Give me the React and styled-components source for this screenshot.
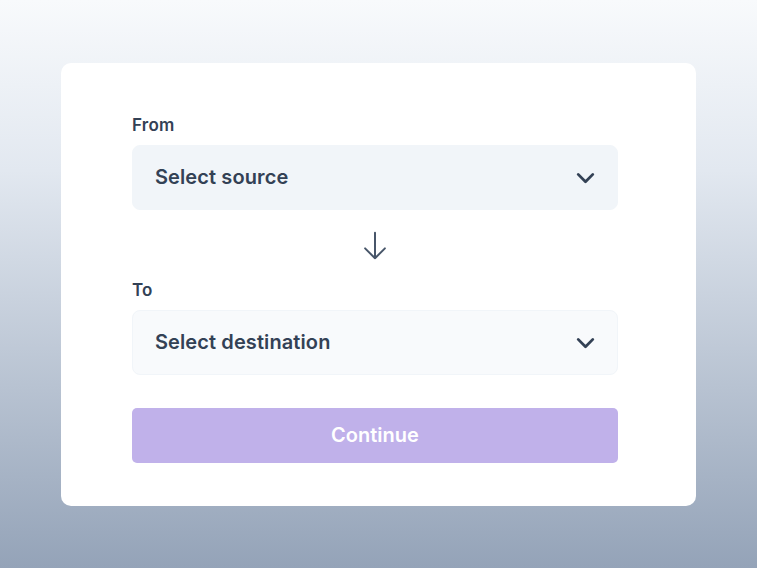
import styled, { createGlobalStyle } from "styled-components";

const GlobalStyle = createGlobalStyle`
  html, body {
    margin: 0;
    padding: 0;
    height: 100%;
  }
  body {
    font-family: Inter, "Noto Sans", "Liberation Sans", sans-serif;
    -webkit-font-smoothing: antialiased;
  }
  #root {
    height: 100%;
  }
`;

const Page = styled.div`
  height: 100%;
  min-height: 568px;
  display: flex;
  align-items: center;
  justify-content: center;
  background: linear-gradient(180deg, #f8fafc 0%, #e2e8f0 30%, #94a3b8 100%);
`;

const Card = styled.div`
  width: 635px;
  box-sizing: border-box;
  background: #fff;
  border-radius: 10px;
  padding: 50px 78px 43px 71px;
  display: flex;
  flex-direction: column;
`;

const Label = styled.label`
  font-size: 17px;
  line-height: 24px;
  font-weight: 600;
  letter-spacing: 0.2px;
  color: #334155;
  margin-bottom: 8px;
`;

const Select = styled.button`
  height: 65px;
  width: 100%;
  box-sizing: border-box;
  display: flex;
  align-items: center;
  justify-content: space-between;
  padding: 0 19px 0 22px;
  border-radius: 8px;
  border: 1px solid #f1f5f9;
  background: ${(p) => (p.$muted ? "#f8fafc" : "#f1f5f9")};
  font-family: inherit;
  font-size: 20px;
  font-weight: 600;
  letter-spacing: 0.1px;
  color: #334155;
  cursor: pointer;
`;

const Swap = styled.div`
  display: flex;
  justify-content: center;
  padding: 18px 0 15px;
  color: #475569;
`;

const ContinueButton = styled.button`
  margin-top: 33px;
  height: 55px;
  width: 100%;
  border: none;
  border-radius: 5px;
  background: #c0b1ea;
  color: #fff;
  font-family: inherit;
  font-size: 20px;
  font-weight: 600;
  cursor: not-allowed;
`;

const Chevron = () => (
  <svg width="25" height="25" viewBox="0 0 24 24" fill="none" stroke="#334155" strokeWidth="2.7" strokeLinecap="round" strokeLinejoin="round">
    <path d="M19 9l-7 7-7-7" />
  </svg>
);

const ArrowDown = () => (
  <svg width="34" height="35" viewBox="0 0 24 24" fill="none" stroke="currentColor" strokeWidth="1.4" strokeLinecap="round" strokeLinejoin="round">
    <path d="M19 14l-7 7m0 0l-7-7m7 7V3" />
  </svg>
);

export default function App() {
  return (
    <>
      <GlobalStyle />
      <Page>
        <Card>
          <Label>From</Label>
          <Select>
            <span>Select source</span>
            <Chevron />
          </Select>
          <Swap>
            <ArrowDown />
          </Swap>
          <Label>To</Label>
          <Select $muted>
            <span>Select destination</span>
            <Chevron />
          </Select>
          <ContinueButton disabled>Continue</ContinueButton>
        </Card>
      </Page>
    </>
  );
}
